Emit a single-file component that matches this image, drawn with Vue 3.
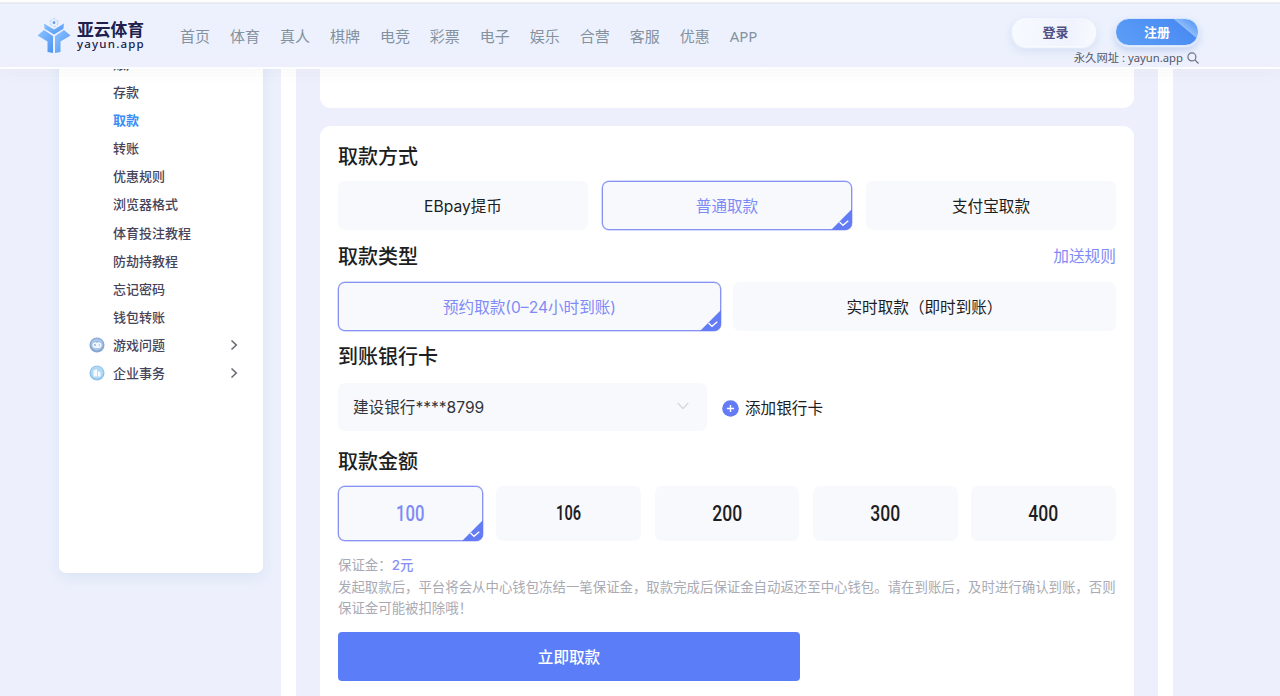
<template>
  <div class="page">
    <header class="header">
      <div class="logo">
        <svg class="logo-mark" viewBox="0 0 34 36">
          <defs>
            <linearGradient id="markFill" x1="0" y1="0" x2="1" y2="1">
              <stop offset="0" stop-color="#8fc4ff" />
              <stop offset="1" stop-color="#4c93f2" />
            </linearGradient>
          </defs>
          <circle cx="17" cy="4.600" r="4" fill="#e6effe" stroke="#a9cdfb" stroke-width="0.9" stroke-dasharray="2.600 1.700" />
          <path d="M17 3l1.500 1.100-.6 1.800h-1.800l-.6-1.800z" fill="#6a9ff0" />
          <path d="M7 5.500l10 6 10-6-.6 5.200L17 16.500l-9.400-5.800z" fill="url(#markFill)" />
          <path d="M0.500 17.500L7 12l9 6v17l-5.500-1V23.500L5.500 20.500z" fill="url(#markFill)" />
          <path d="M33.500 17.500L27 12l-9 6v17l5.500-1V23.500l5-3z" fill="url(#markFill)" />
        </svg>
        <div class="logo-text">
          <span class="logo-name">亚云体育</span>
          <span class="logo-domain">yayun.app</span>
        </div>
      </div>

      <nav class="nav">
        <a v-for="item in navItems" :key="item">{{ item }}</a>
      </nav>

      <div class="account">
        <div class="account-buttons">
          <button class="btn-login">登录</button>
          <button class="btn-register">注册</button>
        </div>
        <div class="site-url">
          <span>永久网址 : yayun.app</span>
          <svg viewBox="0 0 12 12" width="12" height="12">
            <circle cx="4.900" cy="4.900" r="4" />
            <path d="M7.900 7.900l3.600 3.600" />
          </svg>
        </div>
      </div>
    </header>

    <main class="main">
      <aside class="sidebar">
        <a
          v-for="item in helpItems"
          :key="item"
          class="side-item"
          :class="{ active: item === currentHelp }"
        >{{ item }}</a>
        <a class="side-item side-group">
          <svg class="side-icon" viewBox="0 0 16 16">
            <circle cx="8" cy="8" r="7.500" fill="#86a5d0" />
            <circle cx="8" cy="7.500" r="6" fill="#a8c6e8" />
            <rect x="3.500" y="5.500" width="9" height="5.500" rx="2.400" fill="#f2f7ff" />
            <path d="M5 8h2M6 7v2M9.500 8h1.600M8 5.500V4" stroke="#8fb0da" stroke-width="0.9" />
          </svg>
          <span>游戏问题</span>
          <svg class="side-arrow" viewBox="0 0 8 12"><path d="M1.500 1.500L6.300 6l-4.800 4.500" /></svg>
        </a>
        <a class="side-item side-group">
          <svg class="side-icon" viewBox="0 0 16 16">
            <circle cx="8" cy="8" r="7.500" fill="#8fc0ea" />
            <circle cx="8" cy="7.500" r="6.200" fill="#b0d9f5" />
            <path d="M4.500 11.500V5.500L8 4v7.500zM8.800 11.500V6l2.800 1.200v4.300z" fill="#f4faff" />
          </svg>
          <span>企业事务</span>
          <svg class="side-arrow" viewBox="0 0 8 12"><path d="M1.500 1.500L6.300 6l-4.800 4.500" /></svg>
        </a>
      </aside>

      <section class="content">
        <div class="card card-top"></div>

        <div class="card card-form">
          <h2 class="title">取款方式</h2>
          <div class="options methods">
            <div
              v-for="(item, index) in methods"
              :key="item"
              class="option"
              :class="{ selected: index === methodIndex }"
              @click="methodIndex = index"
            >
              <span>{{ item }}</span>
              <svg v-if="index === methodIndex" class="corner" viewBox="0 0 21 21">
                <path d="M21 0v14a7 7 0 0 1-7 7H0z" /><path class="tick" d="M8.500 13l3.500 3.400 5.300-4.600" />
              </svg>
            </div>
          </div>

          <div class="title-row">
            <h2 class="title">取款类型</h2>
            <a class="rule-link">加送规则</a>
          </div>
          <div class="options types">
            <div
              v-for="(item, index) in types"
              :key="item"
              class="option"
              :class="{ selected: index === typeIndex }"
              @click="typeIndex = index"
            >
              <span>{{ item }}</span>
              <svg v-if="index === typeIndex" class="corner" viewBox="0 0 21 21">
                <path d="M21 0v14a7 7 0 0 1-7 7H0z" /><path class="tick" d="M8.500 13l3.500 3.400 5.300-4.600" />
              </svg>
            </div>
          </div>

          <h2 class="title title-bank">到账银行卡</h2>
          <div class="bank-row">
            <div class="select">
              <span>建设银行****8799</span>
              <svg viewBox="0 0 12 8" width="12" height="8"><path d="M0.700 0.900L6 6.700l5.300-5.800" /></svg>
            </div>
            <a class="add-card">
              <svg viewBox="0 0 17 17" width="17" height="17">
                <circle cx="8.500" cy="8.500" r="8.300" fill="#637bf4" />
                <path d="M8.500 4.900v7.200M4.900 8.500h7.200" stroke="#fff" stroke-width="1.400" />
              </svg>
              <span>添加银行卡</span>
            </a>
          </div>

          <h2 class="title title-amount">取款金额</h2>
          <div class="options amounts">
            <div
              v-for="item in amounts"
              :key="item"
              class="option amount"
              :class="{ selected: item === amount, custom: item === 106 }"
              @click="amount = item"
            >
              <span>{{ item }}</span>
              <svg v-if="item === amount" class="corner" viewBox="0 0 21 21">
                <path d="M21 0v14a7 7 0 0 1-7 7H0z" /><path class="tick" d="M8.500 13l3.500 3.400 5.300-4.600" />
              </svg>
            </div>
          </div>

          <div class="notes">
            <p>保证金：<b>2元</b></p>
            <p>发起取款后，平台将会从中心钱包冻结一笔保证金，取款完成后保证金自动返还至中心钱包。请在到账后，及时进行确认到账，否则<br />保证金可能被扣除哦！</p>
          </div>

          <button class="submit">立即取款</button>
        </div>
      </section>
    </main>
  </div>
</template>

<script setup>
import { ref } from 'vue';

const navItems = ['首页', '体育', '真人', '棋牌', '电竞', '彩票', '电子', '娱乐', '合营', '客服', '优惠', 'APP'];

const helpItems = [
  '账户',
  '存款',
  '取款',
  '转账',
  '优惠规则',
  '浏览器格式',
  '体育投注教程',
  '防劫持教程',
  '忘记密码',
  '钱包转账',
];
const currentHelp = ref('取款');

const methods = ['EBpay提币', '普通取款', '支付宝取款'];
const methodIndex = ref(1);

const types = ['预约取款(0–24小时到账)', '实时取款（即时到账）'];
const typeIndex = ref(0);

const amounts = [100, 106, 200, 300, 400];
const amount = ref(100);
</script>

<style>
body {
  margin: 0;
  background: #edf0fc;
}
</style>

<style scoped>
.page {
  height: 696px;
  overflow: hidden;
  display: flex;
  flex-direction: column;
  background: #edf0fc;
  font-family: Inter, 'Noto Sans CJK SC', sans-serif;
  color: #1d1e22;
}

button {
  border: none;
  padding: 0;
  font-family: inherit;
  cursor: pointer;
}

/* header */
.header {
  position: relative;
  z-index: 2;
  flex: none;
  box-sizing: border-box;
  height: 69px;
  padding: 0 81px 0 37px;
  display: flex;
  border-bottom: 2px solid #fcfdff;
  background: linear-gradient(#fdfdfe 0, #fdfdfe 2px, #dcdee6 3px, #edf1fd 4px, #ecf1fd 40px, #edf0fc 100%);
  box-shadow: 0 3px 14px rgba(120, 120, 90, 0.05);
}

.logo {
  display: flex;
  width: 143px;
  padding-top: 18px;
}

.logo-mark {
  width: 34px;
  height: 36px;
}

.logo-text {
  display: flex;
  flex-direction: column;
  padding: 3px 0 0 6px;
  color: #20204c;
}

.logo-name {
  font-size: 16.8px;
  font-weight: 700;
  line-height: 18px;
}

.logo-domain {
  font-family: 'Noto Sans', sans-serif;
  font-size: 11.5px;
  font-weight: 500;
  line-height: 10px;
  letter-spacing: 1.2px;
}

.nav {
  display: flex;
  gap: 19.96px;
  padding-top: 25px;
  font-family: 'Noto Sans', 'Noto Sans CJK SC', sans-serif;
  font-size: 15px;
  line-height: 22px;
  color: #84919f;
}

.account {
  margin-left: auto;
  padding-top: 18px;
}

.account-buttons {
  display: flex;
  justify-content: flex-end;
  gap: 19px;
}

.btn-login,
.btn-register {
  box-sizing: border-box;
  width: 84px;
  height: 28px;
  border-radius: 14px;
  font-size: 13px;
  font-weight: 700;
  line-height: 26px;
}

.btn-login {
  padding-left: 3px;
  color: #514f83;
  background: linear-gradient(100deg, #f7faff, #f0f3fd 70%, #f9fbff);
  box-shadow: 0 2px 2px #fbfdff, 0 4px 8px rgba(140, 165, 215, 0.3);
}

.btn-register {
  color: #fff;
  border: 1px solid #d6e6ff;
  background: linear-gradient(40deg, #5c9ff6 0%, #4b8cf3 78%, #8ebcfa 79%, #5f9df6 92%);
  box-shadow: 0 1px 2px #f4f8ff, 0 4px 7px rgba(120, 155, 220, 0.4);
}

.site-url {
  display: flex;
  justify-content: flex-end;
  align-items: center;
  gap: 4px;
  margin-top: 4px;
  font-family: 'Noto Sans', 'Noto Sans CJK SC', sans-serif;
  font-size: 11.3px;
  line-height: 16px;
  color: #52586a;
}

.site-url svg {
  fill: none;
  stroke: #6b7388;
  stroke-width: 1.2;
}

/* body */
.main {
  flex: 1;
  min-height: 0;
  display: flex;
  align-items: flex-start;
  padding-left: 59px;
}

.sidebar {
  box-sizing: border-box;
  width: 204px;
  height: 523px;
  margin-top: -19px;
  border-radius: 0 0 7px 7px;
  background: #fff;
  box-shadow: 0 4px 14px rgba(160, 190, 225, 0.25);
  display: flex;
  flex-direction: column;
}

.side-item {
  height: 28.1px;
  padding-left: 54px;
  font-size: 13px;
  font-weight: 500;
  line-height: 28px;
  color: #46445a;
}

.side-item.active {
  color: #3d8df7;
  font-weight: 700;
}

.side-group {
  display: flex;
  align-items: center;
  padding: 0 25px 0 30px;
}

.side-icon {
  width: 16px;
  height: 16px;
  margin-right: 8px;
}

.side-arrow {
  width: 8px;
  height: 12px;
  margin-left: auto;
  fill: none;
  stroke: #66666f;
  stroke-width: 1.5;
}

.content {
  box-sizing: border-box;
  width: 892px;
  height: 640px;
  margin-left: 18px;
  padding: 0 24px;
  border: solid #fff;
  border-width: 0 15px;
}

.card {
  box-sizing: border-box;
  background: #fff;
}

.card-top {
  height: 39px;
  border-radius: 0 0 11px 11px;
}

.card-form {
  height: 600px;
  margin-top: 18px;
  padding: 16px 18px;
  border-radius: 11px 11px 0 0;
}

.title {
  margin: 0;
  font-size: 20px;
  font-weight: 500;
  line-height: 30px;
}

.title-row {
  display: flex;
  justify-content: space-between;
  align-items: center;
  margin-top: 12px;
}

.title-bank {
  margin-top: 11px;
}

.title-amount {
  margin-top: 16px;
}

.rule-link {
  font-size: 15.7px;
  line-height: 30px;
  color: #7f8bf5;
}

.options {
  display: grid;
}

.methods {
  grid-template-columns: repeat(3, 1fr);
  gap: 14px;
  margin-top: 9px;
}

.types {
  grid-template-columns: repeat(2, 1fr);
  gap: 12px;
  margin-top: 10px;
}

.amounts {
  grid-template-columns: repeat(5, 1fr);
  gap: 13.5px;
  margin-top: 9px;
}

.option {
  position: relative;
  box-sizing: border-box;
  height: 49px;
  padding-bottom: 2px;
  display: flex;
  align-items: center;
  justify-content: center;
  border-radius: 7px;
  border: 1px solid transparent;
  background: #f8f9fd;
  font-size: 15.6px;
  cursor: pointer;
}

.option.selected {
  border-color: #8793f3;
  box-shadow: 0 0 0 0.5px #a9b2f7;
  color: #7f8bf5;
}

.corner {
  position: absolute;
  right: -1px;
  bottom: -1px;
  width: 21px;
  height: 21px;
  fill: #637bf4;
}

.corner .tick {
  fill: none;
  stroke: #fff;
  stroke-width: 1.4;
}

.option.amount {
  height: 55px;
  padding-bottom: 2px;
  font-family: Roboto, sans-serif;
  font-size: 22.5px;
  font-weight: 500;
}

/* narrow digits */
.amount span {
  transform: scaleX(0.78);
}

.amount.selected span {
  transform: scaleX(0.74);
}

.option.amount.custom {
  font-size: 20.5px;
  font-weight: 600;
}

.amount.custom span {
  transform: scaleX(0.71);
}

.bank-row {
  display: flex;
  align-items: center;
  margin-top: 11px;
}

.select {
  box-sizing: border-box;
  width: 369px;
  height: 48px;
  padding: 0 18px 2px 15px;
  display: flex;
  align-items: center;
  justify-content: space-between;
  border-radius: 7px;
  background: #f8f9fd;
  font-size: 15.6px;
  color: #33343a;
}

.select svg {
  fill: none;
  stroke: #d0d3dc;
  stroke-width: 1.2;
}

.add-card {
  display: flex;
  align-items: center;
  gap: 6px;
  margin-left: 15px;
  padding-top: 2px;
  font-size: 15.6px;
  line-height: 18px;
}

.add-card span {
  padding-top: 2px;
}

.notes {
  margin-top: 14px;
  font-size: 13.41px;
  line-height: 21.7px;
  color: #a9aab4;
  white-space: nowrap;
}

.notes p {
  margin: 0;
}

.notes b {
  font-weight: 500;
  color: #8590f5;
}

.submit {
  display: block;
  width: 462px;
  height: 49px;
  margin-top: 12px;
  padding-bottom: 1px;
  border-radius: 4px;
  background: #5b7df8;
  color: #fff;
  font-size: 15.6px;
  font-weight: 500;
}
</style>
